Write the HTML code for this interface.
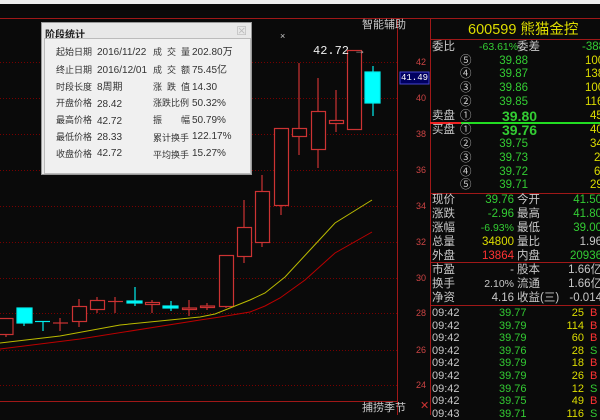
<!DOCTYPE html>
<html><head><meta charset="utf-8"><style>
*{margin:0;padding:0}
body{width:600px;height:415px;background:#0a0a0a;overflow:hidden;position:relative;font-family:"Liberation Sans","Noto Sans CJK SC",sans-serif;font-size:11.5px}
.t{position:absolute;white-space:nowrap;line-height:13px}
.g{color:#3c3}.y{color:#dd0}.w{color:#ccc}.r{color:#f33}.gr{color:#c8c8c8}
.R{text-align:right}
.d{position:absolute;white-space:nowrap;line-height:13px}
.dl{font-size:9px}
.ls{letter-spacing:5px}
</style></head><body>
<div style="position:absolute;left:0;top:0;width:600px;height:4px;background:#eee"></div>
<svg width="600" height="415" style="position:absolute;left:0;top:0">
<g stroke="#700" stroke-dasharray="1,2" stroke-width="1">
<line x1="0" y1="62.5" x2="398" y2="62.5"/><line x1="0" y1="98.5" x2="398" y2="98.5"/><line x1="0" y1="134.5" x2="398" y2="134.5"/><line x1="0" y1="170.5" x2="398" y2="170.5"/><line x1="0" y1="206.5" x2="398" y2="206.5"/><line x1="0" y1="242.5" x2="398" y2="242.5"/><line x1="0" y1="278.5" x2="398" y2="278.5"/><line x1="0" y1="313.5" x2="398" y2="313.5"/><line x1="0" y1="350.5" x2="398" y2="350.5"/><line x1="0" y1="385.5" x2="398" y2="385.5"/>
</g>
<g stroke="#a01818" stroke-width="1" fill="none">
<line x1="0" y1="18.5" x2="600" y2="18.5"/>
<line x1="0" y1="401.5" x2="398" y2="401.5"/>
<line x1="397.5" y1="18" x2="397.5" y2="415"/>
<line x1="430.5" y1="18" x2="430.5" y2="415"/>
<line x1="430" y1="39.5" x2="600" y2="39.5"/>
<line x1="430" y1="193.5" x2="600" y2="193.5"/>
<line x1="430" y1="262.5" x2="600" y2="262.5"/>
<line x1="430" y1="305.5" x2="600" y2="305.5"/>
</g>
<line x1="430" y1="123" x2="461" y2="123" stroke="#e22" stroke-width="2"/>
<line x1="461" y1="123" x2="600" y2="123" stroke="#2d2" stroke-width="2"/>
<g stroke="#c33" stroke-width="1.2" fill="#0a0a0a">
<line x1="6" y1="334" x2="6" y2="337"/><rect x="-1" y="318.5" width="14" height="16"/>
<line x1="60" y1="318" x2="60" y2="331"/><line x1="53" y1="323" x2="68" y2="323"/>
<line x1="79" y1="299" x2="79" y2="327"/><rect x="72.5" y="306.5" width="14" height="15"/>
<line x1="97" y1="297" x2="97" y2="313"/><rect x="90.5" y="300.5" width="14" height="9"/>
<line x1="115" y1="297" x2="115" y2="313"/><line x1="108" y1="301.5" x2="123" y2="301.5"/>
<line x1="152" y1="300" x2="152" y2="313"/><rect x="145.5" y="302.5" width="14" height="2"/>
<line x1="189" y1="300" x2="189" y2="316"/><rect x="182.5" y="308" width="14" height="1.5"/>
<line x1="207" y1="303" x2="207" y2="310"/><rect x="200.5" y="306" width="14" height="1.5"/>
<line x1="226" y1="306" x2="226" y2="308"/><rect x="219.5" y="255.5" width="14" height="51"/>
<line x1="244" y1="200" x2="244" y2="263"/><rect x="237.5" y="227.5" width="14" height="29"/>
<line x1="262" y1="175" x2="262" y2="247"/><rect x="255.5" y="191.5" width="14" height="51"/>
<line x1="281" y1="205" x2="281" y2="215"/><rect x="274.5" y="128.5" width="14" height="77"/>
<line x1="299" y1="63" x2="299" y2="155"/><rect x="292.5" y="128.5" width="14" height="8"/>
<line x1="318" y1="78" x2="318" y2="168"/><rect x="311.5" y="111.5" width="14" height="38"/>
<line x1="336" y1="90" x2="336" y2="132"/><rect x="329.5" y="120.5" width="14" height="3"/>
<rect x="347.5" y="50.5" width="14" height="79"/>
</g>
<g stroke="#0ee" fill="#0ff" stroke-width="1.2">
<line x1="24" y1="315" x2="24" y2="326"/><rect x="17" y="308" width="15" height="15"/>
<line x1="43" y1="321" x2="43" y2="331"/><line x1="35" y1="321.5" x2="50" y2="321.5"/>
<line x1="135" y1="287" x2="135" y2="306"/><rect x="127" y="301" width="15" height="2"/>
<line x1="171" y1="301" x2="171" y2="311"/><rect x="163" y="306" width="15" height="2"/>
<line x1="373" y1="66" x2="373" y2="116"/><rect x="365" y="72" width="15" height="31"/>
</g>
<polyline fill="none" stroke="#bb0" stroke-width="1" points="0,343 60,336 120,325 200,317 215,314 230,308 250,300 265,293 285,277 310,250 335,223 372,200"/>
<polyline fill="none" stroke="#b00" stroke-width="1" points="0,349 80,339 200,320 220,317 250,312 265,306 280,298 305,280 335,253 372,232"/>
<rect x="400" y="72" width="29" height="12" fill="#000060" stroke="#44c"/>
</svg>
<div class="t gr" style="left:362px;top:19px;font-size:11px">智能辅助</div>
<div class="t gr" style="left:362px;top:402px;font-size:11px">捕捞季节</div>
<div class="t" style="left:280px;top:30px;color:#ccc;font-size:9px">×</div>
<div class="t" style="left:313px;top:45px;color:#eee;font-family:'Liberation Mono',monospace;font-size:12px">42.72 <span style="color:#aaa">→</span></div>
<div class="t" style="left:401px;top:72px;color:#fff;font-size:9px;font-family:'Liberation Mono',monospace">41.49</div>
<div class="t r" style="left:416px;top:56px;font-size:9px;color:#c44">42</div>
<div class="t r" style="left:416px;top:92px;font-size:9px;color:#c44">40</div>
<div class="t r" style="left:416px;top:128px;font-size:9px;color:#c44">38</div>
<div class="t r" style="left:416px;top:164px;font-size:9px;color:#c44">36</div>
<div class="t r" style="left:416px;top:200px;font-size:9px;color:#c44">34</div>
<div class="t r" style="left:416px;top:236px;font-size:9px;color:#c44">32</div>
<div class="t r" style="left:416px;top:272px;font-size:9px;color:#c44">30</div>
<div class="t r" style="left:416px;top:307px;font-size:9px;color:#c44">28</div>
<div class="t r" style="left:416px;top:344px;font-size:9px;color:#c44">26</div>
<div class="t r" style="left:416px;top:379px;font-size:9px;color:#c44">24</div>
<div class="t r" style="left:420px;top:400px;font-size:11px;color:#c33">✕</div>
<!-- dialog -->
<div style="position:absolute;left:41px;top:22px;width:211px;height:153px;background:#e8e8e8;border:1px solid #999;box-sizing:border-box">
<div style="position:absolute;left:3px;top:3px;font-size:10px;font-weight:bold;color:#222">阶段统计</div>
<div style="position:absolute;right:4px;top:1px;color:#bbb;font-size:12px">☒</div>
<div style="position:absolute;left:2px;top:15px;width:205px;height:134px;background:#f0f0f0;border:1px solid #bbb"></div>
<div style="position:absolute;left:0;top:0;font-size:10px;color:#333;line-height:13px">
<div class="d dl" style="left:14px;top:23px">起始日期</div><div class="d" style="left:55px;top:23px">2016/11/22</div><div class="d dl ls" style="left:111px;top:23px">成交量</div><div class="d" style="left:150px;top:23px">202.80万</div>
<div class="d dl" style="left:14px;top:41px">终止日期</div><div class="d" style="left:55px;top:41px">2016/12/01</div><div class="d dl ls" style="left:111px;top:41px">成交额</div><div class="d" style="left:150px;top:41px">75.45亿</div>
<div class="d dl" style="left:14px;top:58px">时段长度</div><div class="d" style="left:55px;top:58px">8周期</div><div class="d dl ls" style="left:111px;top:58px">涨跌值</div><div class="d" style="left:150px;top:58px">14.30</div>
<div class="d dl" style="left:14px;top:74px">开盘价格</div><div class="d" style="left:55px;top:75px">28.42</div><div class="d dl" style="left:111px;top:74px">涨跌比例</div><div class="d" style="left:150px;top:74px">50.32%</div>
<div class="d dl" style="left:14px;top:91px">最高价格</div><div class="d" style="left:55px;top:92px">42.72</div><div class="d dl" style="left:111px;top:91px;letter-spacing:19px">振幅</div><div class="d" style="left:150px;top:91px">50.79%</div>
<div class="d dl" style="left:14px;top:108px">最低价格</div><div class="d" style="left:55px;top:108px">28.33</div><div class="d dl" style="left:111px;top:109px">累计换手</div><div class="d" style="left:150px;top:107px">122.17%</div>
<div class="d dl" style="left:14px;top:125px">收盘价格</div><div class="d" style="left:55px;top:124px">42.72</div><div class="d dl" style="left:111px;top:126px">平均换手</div><div class="d" style="left:150px;top:124px">15.27%</div>
</div></div>
<!-- right panel -->
<div class="t y" style="left:468px;top:22px;font-size:14.5px;line-height:17px">600599 熊猫金控</div>
<div class="t gr" style="left:432px;top:41px">委比</div>
<div class="t g" style="left:479px;top:41px;font-size:10.5px">-63.61%</div><div class="t gr" style="left:517px;top:41px">委差</div><div class="t g" style="left:582px;top:41px">-388</div>
<div class="t gr" style="left:460px;top:55px">⑤</div><div class="t g R" style="left:480px;top:55px;width:48px">39.88</div><div class="t y" style="left:585px;top:55px">100</div>
<div class="t gr" style="left:460px;top:68px">④</div><div class="t g R" style="left:480px;top:68px;width:48px">39.87</div><div class="t y" style="left:585px;top:68px">138</div>
<div class="t gr" style="left:460px;top:82px">③</div><div class="t g R" style="left:480px;top:82px;width:48px">39.86</div><div class="t y" style="left:585px;top:82px">100</div>
<div class="t gr" style="left:460px;top:96px">②</div><div class="t g R" style="left:480px;top:96px;width:48px">39.85</div><div class="t y" style="left:585px;top:96px">116</div>
<div class="t gr" style="left:432px;top:110px">卖盘</div><div class="t gr" style="left:460px;top:110px">①</div><div class="t g" style="left:502px;top:108px;font-size:14px;line-height:16px;font-weight:bold">39.80</div><div class="t y" style="left:590px;top:110px">45</div>
<div class="t gr" style="left:432px;top:124px">买盘</div><div class="t gr" style="left:460px;top:124px">①</div><div class="t g" style="left:502px;top:122px;font-size:14px;line-height:16px;font-weight:bold">39.76</div><div class="t y" style="left:590px;top:124px">40</div>
<div class="t gr" style="left:460px;top:138px">②</div><div class="t g R" style="left:480px;top:138px;width:48px">39.75</div><div class="t y" style="left:590px;top:138px">34</div>
<div class="t gr" style="left:460px;top:152px">③</div><div class="t g R" style="left:480px;top:152px;width:48px">39.73</div><div class="t y" style="left:594px;top:152px">2</div>
<div class="t gr" style="left:460px;top:166px">④</div><div class="t g R" style="left:480px;top:166px;width:48px">39.72</div><div class="t y" style="left:594px;top:166px">6</div>
<div class="t gr" style="left:460px;top:179px">⑤</div><div class="t g R" style="left:480px;top:179px;width:48px">39.71</div><div class="t y" style="left:590px;top:179px">29</div>
<div class="t gr" style="left:432px;top:194px">现价</div><div class="t g R" style="left:460px;top:194px;width:54px">39.76</div><div class="t gr" style="left:517px;top:194px">今开</div><div class="t g R" style="left:540px;top:194px;width:62px">41.50</div>
<div class="t gr" style="left:432px;top:208px">涨跌</div><div class="t g R" style="left:460px;top:208px;width:54px">-2.96</div><div class="t gr" style="left:517px;top:208px">最高</div><div class="t g R" style="left:540px;top:208px;width:62px">41.80</div>
<div class="t gr" style="left:432px;top:222px">涨幅</div><div class="t g R" style="left:460px;top:222px;width:54px;font-size:10.5px">-6.93%</div><div class="t gr" style="left:517px;top:222px">最低</div><div class="t g R" style="left:540px;top:222px;width:62px">39.00</div>
<div class="t gr" style="left:432px;top:236px">总量</div><div class="t y R" style="left:460px;top:236px;width:54px">34800</div><div class="t gr" style="left:517px;top:236px">量比</div><div class="t gr R" style="left:540px;top:236px;width:62px">1.96</div>
<div class="t gr" style="left:432px;top:250px">外盘</div><div class="t r R" style="left:460px;top:250px;width:54px">13864</div><div class="t gr" style="left:517px;top:250px">内盘</div><div class="t g R" style="left:540px;top:250px;width:62px">20936</div>
<div class="t gr" style="left:432px;top:264px">市盈</div><div class="t gr R" style="left:460px;top:264px;width:54px">-</div><div class="t gr" style="left:517px;top:264px">股本</div><div class="t gr R" style="left:540px;top:264px;width:62px">1.66亿</div>
<div class="t gr" style="left:432px;top:278px">换手</div><div class="t gr R" style="left:460px;top:278px;width:54px;font-size:10.5px">2.10%</div><div class="t gr" style="left:517px;top:278px">流通</div><div class="t gr R" style="left:540px;top:278px;width:62px">1.66亿</div>
<div class="t gr" style="left:432px;top:292px">净资</div><div class="t gr R" style="left:460px;top:292px;width:54px">4.16</div><div class="t gr" style="left:517px;top:292px">收益(三)</div><div class="t gr R" style="left:540px;top:292px;width:62px">-0.014</div>
<div style="position:absolute;left:432px;top:307px;width:170px;line-height:12.6px;font-size:11px">
<div style="position:relative;height:12.6px"><span class="gr" style="position:absolute;left:0">09:42</span><span class="g" style="position:absolute;left:67px">39.77</span><span class="y" style="position:absolute;right:18px">25</span><span class="r" style="position:absolute;left:158px">B</span></div>
<div style="position:relative;height:12.6px"><span class="gr" style="position:absolute;left:0">09:42</span><span class="g" style="position:absolute;left:67px">39.79</span><span class="y" style="position:absolute;right:18px">114</span><span class="r" style="position:absolute;left:158px">B</span></div>
<div style="position:relative;height:12.6px"><span class="gr" style="position:absolute;left:0">09:42</span><span class="g" style="position:absolute;left:67px">39.79</span><span class="y" style="position:absolute;right:18px">60</span><span class="r" style="position:absolute;left:158px">B</span></div>
<div style="position:relative;height:12.6px"><span class="gr" style="position:absolute;left:0">09:42</span><span class="g" style="position:absolute;left:67px">39.76</span><span class="y" style="position:absolute;right:18px">28</span><span class="g" style="position:absolute;left:158px">S</span></div>
<div style="position:relative;height:12.6px"><span class="gr" style="position:absolute;left:0">09:42</span><span class="g" style="position:absolute;left:67px">39.79</span><span class="y" style="position:absolute;right:18px">18</span><span class="r" style="position:absolute;left:158px">B</span></div>
<div style="position:relative;height:12.6px"><span class="gr" style="position:absolute;left:0">09:42</span><span class="g" style="position:absolute;left:67px">39.79</span><span class="y" style="position:absolute;right:18px">26</span><span class="r" style="position:absolute;left:158px">B</span></div>
<div style="position:relative;height:12.6px"><span class="gr" style="position:absolute;left:0">09:42</span><span class="g" style="position:absolute;left:67px">39.76</span><span class="y" style="position:absolute;right:18px">12</span><span class="g" style="position:absolute;left:158px">S</span></div>
<div style="position:relative;height:12.6px"><span class="gr" style="position:absolute;left:0">09:42</span><span class="g" style="position:absolute;left:67px">39.75</span><span class="y" style="position:absolute;right:18px">49</span><span class="r" style="position:absolute;left:158px">B</span></div>
<div style="position:relative;height:12.6px"><span class="gr" style="position:absolute;left:0">09:43</span><span class="g" style="position:absolute;left:67px">39.71</span><span class="y" style="position:absolute;right:18px">116</span><span class="g" style="position:absolute;left:158px">S</span></div>
</div>
</body></html>
